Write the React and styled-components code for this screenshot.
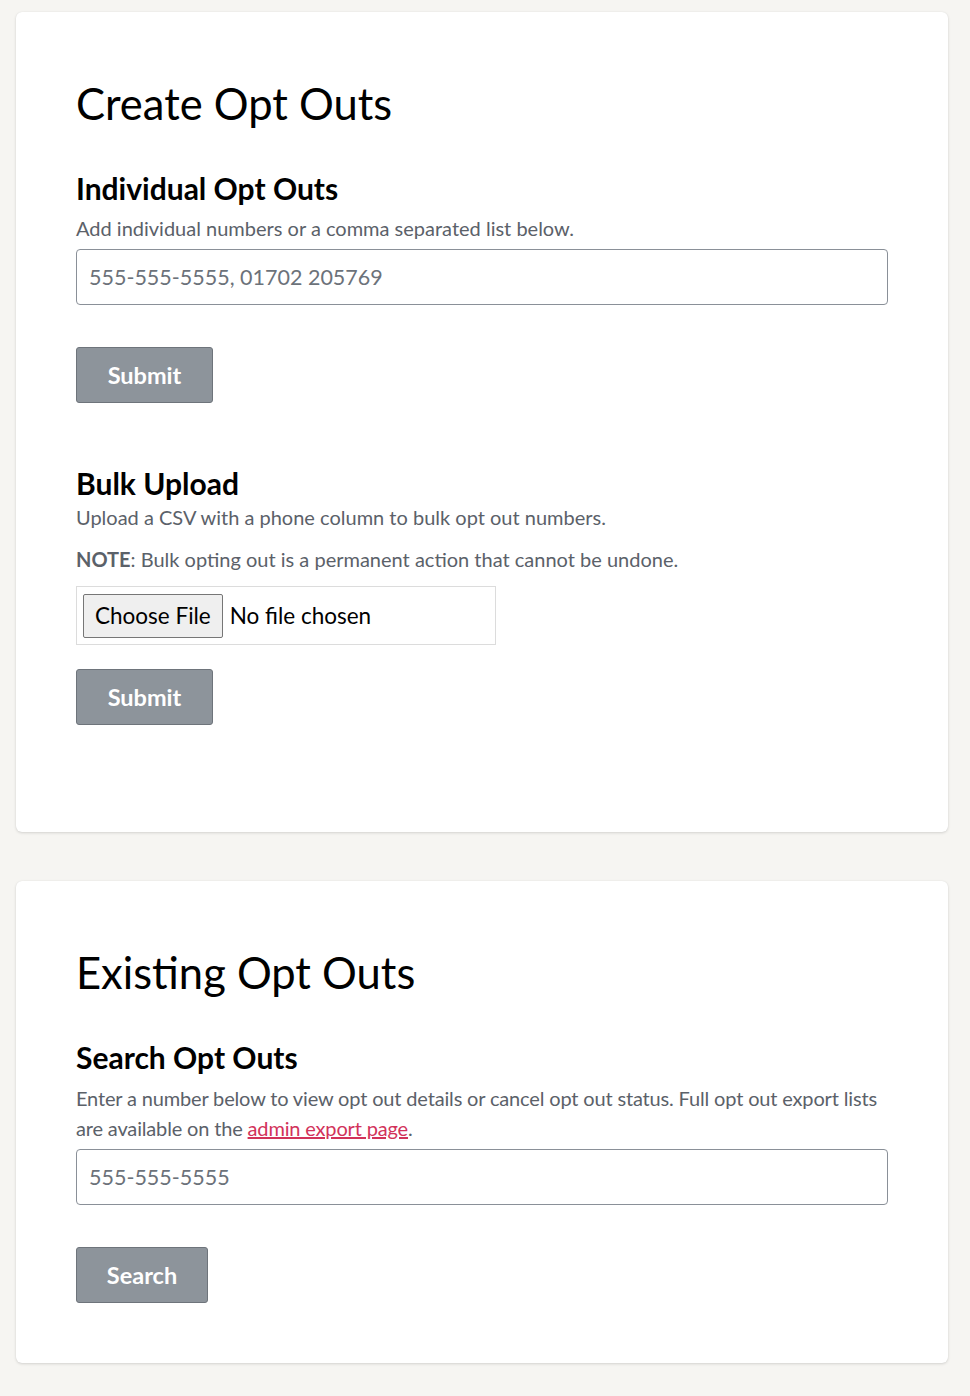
import React from "react";
import styled, { createGlobalStyle } from "styled-components";

const Global = createGlobalStyle`
  html, body { margin: 0; padding: 0; background: #f6f5f2; }
  body { font-family: Lato, "Noto Sans", sans-serif; color: #000; }
  * { box-sizing: border-box; }
`;

const Page = styled.div`
  padding: 12px 22px 34px 16px;
  display: flex;
  flex-direction: column;
  gap: 49px;
`;

const Card = styled.section`
  background: #fff;
  border-radius: 6px;
  box-shadow: 0 1px 3px rgba(0, 0, 0, 0.14), 0 0 1px rgba(0, 0, 0, 0.08);
  padding: 63px 60px ${(p) => p.$bottom || 60}px;
  display: flex;
  flex-direction: column;
`;

const Title = styled.h1`
  margin: 0;
  font-size: 43.5px;
  line-height: 56px;
  font-weight: 400;
`;

const Heading = styled.h2`
  margin: ${(p) => p.$top ?? 39}px 0 0;
  font-size: 30px;
  line-height: 36px;
  font-weight: 700;
`;

const Text = styled.p`
  margin: ${(p) => p.$top ?? 7}px 0 0;
  font-size: 20px;
  line-height: 30px;
  letter-spacing: ${(p) => (p.$tight ? "-0.16px" : "normal")};
  color: #5b6169;
`;

const Strong = styled.strong`
  font-weight: 700;
`;

const Link = styled.a`
  color: #d2325a;
  text-decoration: underline;
`;

const Input = styled.input`
  display: block;
  width: 100%;
  height: 56px;
  margin-top: 6px;
  padding: 0 12px;
  border: 1px solid #8a9098;
  border-radius: 4px;
  font-family: inherit;
  font-size: 21.5px;
  color: #333;
  background: #fff;
  &::placeholder { color: #6c727a; }
`;

const Button = styled.button`
  align-self: flex-start;
  margin-top: ${(p) => p.$top}px;
  width: ${(p) => p.$w}px;
  height: 56px;
  background: #8d949b;
  border: 1px solid #6e747b;
  border-radius: 3px;
  color: #fff;
  font-family: inherit;
  font-size: 23.5px;
  font-weight: 700;
  cursor: pointer;
`;

const FileBox = styled.label`
  align-self: flex-start;
  margin-top: 12px;
  width: 420px;
  height: 59px;
  border: 1px solid #dcdcdc;
  display: flex;
  align-items: center;
  padding: 0 6px;
  gap: 7px;
  font-size: 22.5px;
`;

const FileButton = styled.span`
  display: inline-flex;
  align-items: center;
  justify-content: center;
  height: 44px;
  padding: 0 11px;
  background: #efefef;
  border: 1px solid #767676;
  border-radius: 2px;
  color: #000;
`;

const FileName = styled.span`
  color: #000;
`;

export default function App() {
  return (
    <>
      <Global />
      <Page>
        <Card $bottom={107}>
          <Title>Create Opt Outs</Title>
          <Heading>Individual Opt Outs</Heading>
          <Text>Add individual numbers or a comma separated list below.</Text>
          <Input placeholder="555-555-5555, 01702 205769" />
          <Button $top={42} $w={137}>Submit</Button>
          <Heading $top={62}>Bulk Upload</Heading>
          <Text $top={1}>Upload a CSV with a phone column to bulk opt out numbers.</Text>
          <Text $top={12}>
            <Strong>NOTE</Strong>: Bulk opting out is a permanent action that cannot be undone.
          </Text>
          <FileBox>
            <FileButton>Choose File</FileButton>
            <FileName>No file chosen</FileName>
          </FileBox>
          <Button $top={24} $w={137}>Submit</Button>
        </Card>
        <Card>
          <Title>Existing Opt Outs</Title>
          <Heading>Search Opt Outs</Heading>
          <Text $top={8} $tight>
            Enter a number below to view opt out details or cancel opt out status. Full opt out export lists
            are available on the <Link href="#">admin export page</Link>.
          </Text>
          <Input placeholder="555-555-5555" />
          <Button $top={42} $w={132}>Search</Button>
        </Card>
      </Page>
    </>
  );
}
